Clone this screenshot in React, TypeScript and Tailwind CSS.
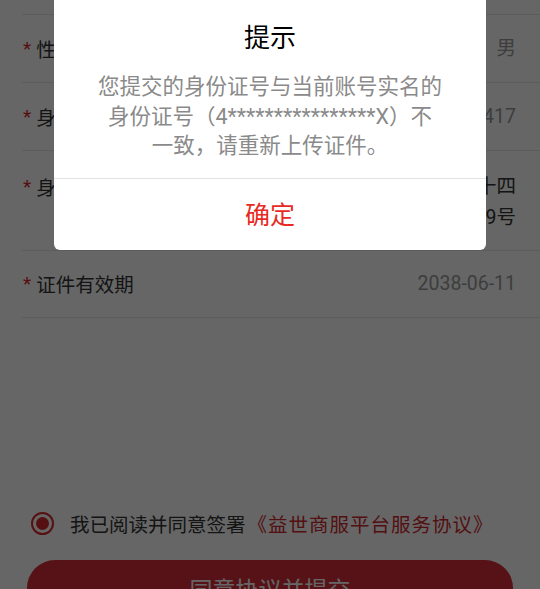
import React from 'react'

const font = { fontFamily: '"Noto Sans CJK SC", "Noto Sans", sans-serif' }
const latin = { fontFamily: 'Roboto, "Noto Sans CJK SC", sans-serif' }

function Star() {
  return (
    <span className="mr-[5px] ml-[1px] text-[19px] text-[#d7282f]" style={latin}>
      *
    </span>
  )
}

function Row({ label, value, dark, multi }: { label: string; value: React.ReactNode; dark?: boolean; multi?: boolean }) {
  return (
    <div
      className={`ml-[22px] flex justify-between border-b border-[#e5e5e5] pr-[24px] ${
        multi ? 'items-start pt-[20px] pb-[17px]' : 'h-[68px] items-center'
      }`}
    >
      <div className="flex items-center text-[19.5px] leading-[31px] text-[#333]">
        <Star />
        {label}
      </div>
      <div className={`text-right text-[19.5px] leading-[31px] ${dark ? 'text-[#333]' : 'text-[#9a9a9a]'}`} style={latin}>
        {value}
      </div>
    </div>
  )
}

export default function App() {
  return (
    <div className="relative h-[589px] w-[540px] overflow-hidden bg-white" style={font}>
      {/* page underneath */}
      <div className="ml-[22px] h-[15px] border-b border-[#e5e5e5]" />
      <Row label="性别" value="男" />
      <Row label="身份证号" value="44030119900101417" />
      <Row
        label="身份地址"
        dark
        multi
        value={
          <>
            广东省深圳市福田区华强北路二十四
            <br />
            号华强广场3309号
          </>
        }
      />
      <div className="ml-[22px] flex h-[67px] items-center justify-between border-b border-[#e5e5e5] pr-[24px]">
        <div className="flex items-center text-[19.5px] text-[#333]">
          <Star />
          证件有效期
        </div>
        <div className="text-[19.5px] text-[#9a9a9a]" style={latin}>
          2038-06-11
        </div>
      </div>

      <div className="mt-[191px] flex items-center pl-[31px]">
        <div className="flex h-[23px] w-[23px] items-center justify-center rounded-full border-2 border-[#d7282f]">
          <div className="h-[13px] w-[13px] rounded-full bg-[#d7282f]" />
        </div>
        <span className="ml-[16px] text-[19.5px] text-[#333]">我已阅读并同意签署</span>
        <span className="ml-[2px] text-[19.5px] tracking-[1px] text-[#cf2a2f]">《益世商服平台服务协议》</span>
      </div>

      <div className="mx-[27px] mt-[22px] flex h-[56px] items-center justify-center rounded-full bg-[#d72d37] text-[23px] text-white">
        同意协议并提交
      </div>

      {/* overlay */}
      <div className="absolute inset-0 bg-black/60" />

      {/* dialog */}
      <div className="absolute left-[54px] top-[-10px] w-[432px] rounded-[6px] bg-white">
        <div className="pt-[29px] text-center text-[26px] leading-[34px] text-black">提示</div>
        <div
          className="mt-[19px] px-[10px] pb-[17px] text-center text-[21.5px] leading-[29.5px] text-[#8a8a8a]"
          style={latin}
        >
          您提交的身份证号与当前账号实名的
          <br />
          身份证号（4****************X）不
          <br />
          一致，请重新上传证件。
        </div>
        <div className="flex h-[72px] items-center justify-center border-t border-[#e2e2e2] text-[25px] text-[#e8291f]">
          确定
        </div>
      </div>
    </div>
  )
}
